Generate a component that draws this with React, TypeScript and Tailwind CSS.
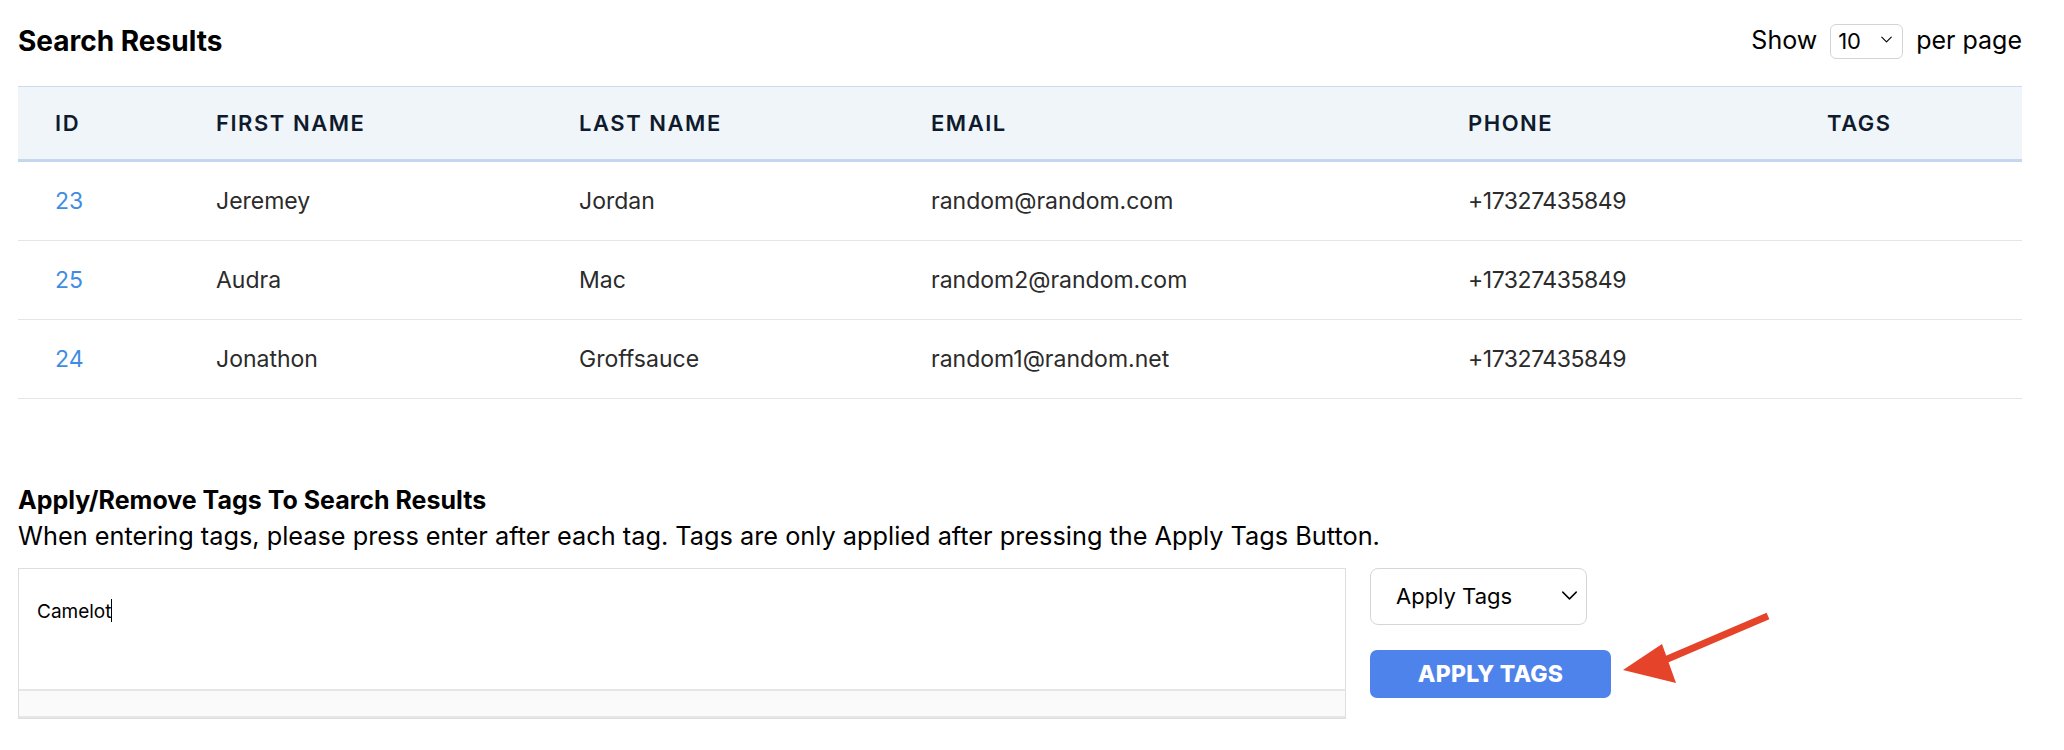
import { ChevronDown } from "lucide-react";

const rows = [
  { id: 23, first: "Jeremey", last: "Jordan", email: "random@random.com", phone: "+17327435849" },
  { id: 25, first: "Audra", last: "Mac", email: "random2@random.com", phone: "+17327435849" },
  { id: 24, first: "Jonathon", last: "Groffsauce", email: "random1@random.net", phone: "+17327435849" },
];

const cols = "grid grid-cols-[161px_363px_352px_537px_359px_1fr]";

const App = () => {
  return (
    <div className="min-h-[750px] w-[2064px] bg-white pl-[18px] pr-[42px] font-['Inter',sans-serif] text-[#2b2b2b]">
      {/* Title row */}
      <div className="flex h-[82px] items-center justify-between">
        <h1 className="text-[28px] font-bold text-black">Search Results</h1>
        <div className="flex items-center gap-[13px] text-[25px] text-black">
          <span>Show</span>
          <div className="relative">
            <select className="h-[35px] w-[73px] appearance-none rounded-[6px] border border-[#d4d4d4] bg-white pl-[7px] text-[22px] text-black">
              <option>10</option>
            </select>
            <ChevronDown className="pointer-events-none absolute right-[7px] top-[8px] h-[19px] w-[19px] text-black" strokeWidth={1.4} />
          </div>
          <span>per page</span>
        </div>
      </div>

      {/* Table */}
      <div className="mt-[4px]">
        <div className={`${cols} h-[76px] items-center border-t border-b-[3px] border-t-[#c9dbf0] border-b-[#c5d7ee] bg-[#f0f5fa] text-[22px] font-semibold tracking-[0.07em] text-[#0f1b2d]`}>
          <div className="pl-[37px]">ID</div>
          <div className="pl-[37px]">FIRST NAME</div>
          <div className="pl-[37px]">LAST NAME</div>
          <div className="pl-[37px]">EMAIL</div>
          <div className="pl-[37px]">PHONE</div>
          <div className="pl-[37px]">TAGS</div>
        </div>
        {rows.map((r) => (
          <div key={r.id} className={`${cols} h-[79px] items-center border-b border-[#e6e6e6] text-[23px]`}>
            <div className="pl-[37px] text-[#3f8de3]">{r.id}</div>
            <div className="pl-[37px]">{r.first}</div>
            <div className="pl-[37px]">{r.last}</div>
            <div className="pl-[37px]">{r.email}</div>
            <div className="pl-[37px] tracking-[-0.02em]">{r.phone}</div>
            <div className="pl-[37px]"></div>
          </div>
        ))}
      </div>

      {/* Tags section */}
      <div className="mt-[83px]">
        <h2 className="text-[25px] leading-[36px] font-bold text-black">Apply/Remove Tags To Search Results</h2>
        <p className="text-[25.3px] leading-[36px] text-black">
          When entering tags, please press enter after each tag. Tags are only applied after pressing the Apply Tags Button.
        </p>

        <div className="mt-[14px] flex gap-[24px]">
          <div className="w-[1328px] border border-[#dedede]">
            <div className="h-[120px] px-[18px] pt-[26px] text-[19px] text-black">
              <span>Camelot</span>
              <span className="inline-block h-[23px] w-px translate-y-[4px] bg-black" />
            </div>
            <div className="h-[29px] border-t-2 border-b-2 border-[#e6e6e6] bg-[#fafafa]" />
          </div>

          <div className="relative flex flex-col gap-[25px]">
            <div className="relative w-[217px]">
              <select className="h-[57px] w-full appearance-none rounded-[8px] border border-[#d6d6d6] bg-white pl-[25px] text-[22px] text-black">
                <option>Apply Tags</option>
              </select>
              <ChevronDown className="pointer-events-none absolute right-[4px] top-[14px] h-[27px] w-[27px] text-black" strokeWidth={1.3} />
            </div>
            <button className="h-[48px] w-[241px] rounded-[7px] bg-[#4f83ec] text-[23px] font-extrabold tracking-[0.01em] text-white">
              APPLY TAGS
            </button>

            {/* annotation arrow */}
            <svg className="absolute left-[250px] top-[40px]" width="160" height="80" viewBox="0 0 160 80">
              <line x1="148" y1="8" x2="45" y2="52" stroke="#e6432b" strokeWidth="7" />
              <polygon points="3,62 42,36 56,75" fill="#e6432b" />
            </svg>
          </div>
        </div>
      </div>
    </div>
  );
};

export default App;
